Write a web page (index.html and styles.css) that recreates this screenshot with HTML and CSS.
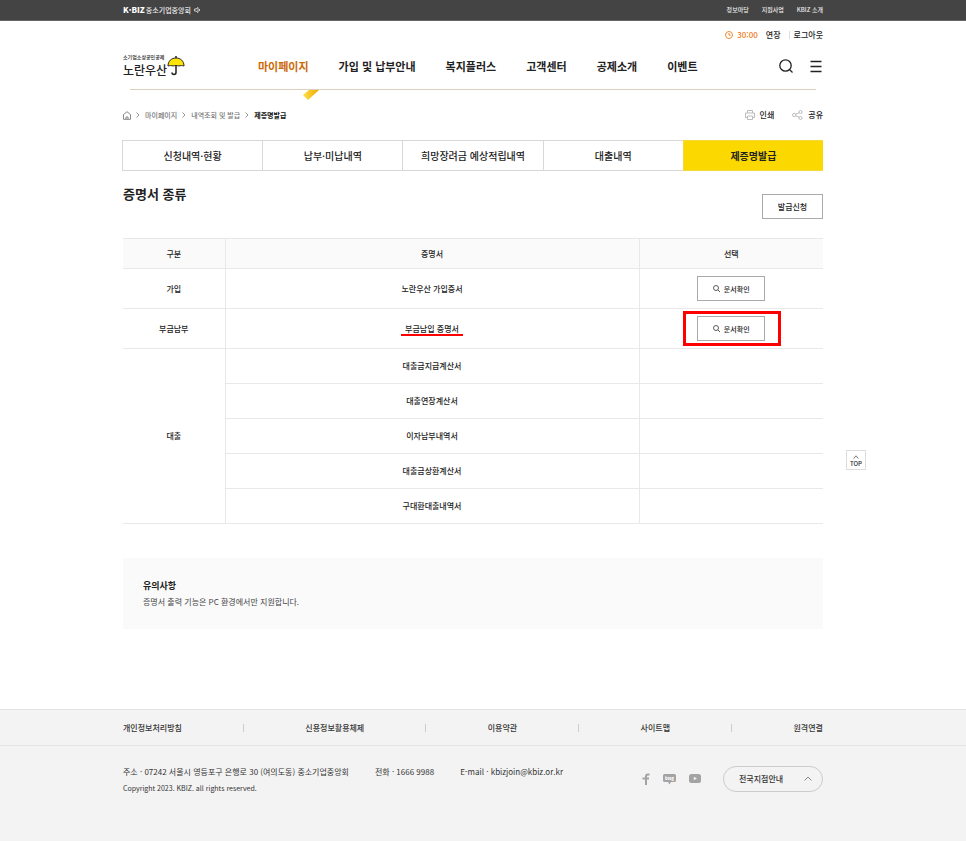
FILE: index.html
```html
<!DOCTYPE html>
<html lang="ko">
<head>
  <meta charset="UTF-8">
  <title>제증명발급 - 노란우산</title>
  <link rel="stylesheet" href="styles.css">
</head>
<body>
  <div class="topbar">
    <div class="inner">
      <a href="#" class="kbiz"><strong>K·BIZ</strong> 중소기업중앙회
        <svg width="6" height="6" viewBox="0 0 6 6" fill="none" stroke="#ccc"><path d="M0.500 2h1.500l2-1.500v5L2 4H0.500zM5.500 2v2"/></svg>
      </a>
      <div class="toplinks">
        <a href="#">정보마당</a>
        <a href="#">지원사업</a>
        <a href="#">KBIZ 소개</a>
      </div>
    </div>
  </div>

  <header>
    <div class="inner util">
      <svg width="8" height="8" viewBox="0 0 8 8" fill="none" stroke="#ee8a35"><circle cx="4" cy="4" r="3.500"/><path d="M4 2v2.200h1.700"/></svg>
      <span class="time">30:00</span>
      <button type="button">연장</button>
      <a href="#" class="logout">로그아웃</a>
    </div>
    <div class="inner gnb">
      <a href="#" class="logo">
        <span class="logo-text"><small>소기업소상공인공제</small><b>노란우산</b></span>
        <svg width="18" height="20" viewBox="0 0 18 20" fill="none" stroke="#222">
          <path d="M9 0v2M9 10v6.500c0 2.500-4 2.500-4 0" stroke-width="1.500"/>
          <path d="M1 10C1 5 4.500 2 9 2s8 3 8 8c-1.500-.6-3.500-.6-5 0-1.500-.6-4.500-.6-6 0-1.500-.6-3.500-.6-5 0z" fill="#fde400"/>
        </svg>
      </a>
      <nav>
        <a href="#" class="on">마이페이지</a>
        <a href="#">가입 및 납부안내</a>
        <a href="#">복지플러스</a>
        <a href="#">고객센터</a>
        <a href="#">공제소개</a>
        <a href="#">이벤트</a>
      </nav>
      <div class="gnb-btns">
        <button type="button" aria-label="검색"><svg width="14" height="14" viewBox="0 0 14 14" fill="none" stroke="#222" stroke-width="1.300"><circle cx="6.500" cy="6.500" r="5.700"/><path d="M10.500 10.500l3 3"/></svg></button>
        <button type="button" aria-label="전체메뉴"><svg width="12" height="14" viewBox="0 0 12 14" stroke="#222" stroke-width="1.300"><path d="M0.500 2.500h11M0.500 7.500h11M0.500 12.500h11"/></svg></button>
      </div>
    </div>
    <div class="inner line">
      <svg class="pointer" width="18" height="11" viewBox="0 0 18 11">
        <defs><linearGradient id="gold"><stop offset="0" stop-color="#ffe04a"/><stop offset="1" stop-color="#efa800"/></linearGradient></defs>
        <path d="M7 0h10L6 10 1 5z" fill="url(#gold)"/>
      </svg>
    </div>
  </header>

  <main>
    <div class="inner">
      <div class="location">
        <div class="crumbs">
          <a href="#" aria-label="홈"><svg width="8" height="9" viewBox="0 0 8 9" fill="none" stroke="#888"><path d="M0.500 3.500L4 0.700l3.500 2.800v4.800h-7zM3 8.300V6h2v2.300"/></svg></a>
          <svg class="arr" width="4" height="6" viewBox="0 0 4 6"><path d="M0.500 0.500L3 3 0.500 5.500"/></svg>
          <a href="#">마이페이지</a>
          <svg class="arr" width="4" height="6" viewBox="0 0 4 6"><path d="M0.500 0.500L3 3 0.500 5.500"/></svg>
          <a href="#">내역조회 및 발급</a>
          <svg class="arr" width="4" height="6" viewBox="0 0 4 6"><path d="M0.500 0.500L3 3 0.500 5.500"/></svg>
          <span class="now">제증명발급</span>
        </div>
        <div class="tools">
          <button type="button"><svg width="10" height="10" viewBox="0 0 10 10" fill="none" stroke="#bbb"><path d="M2.500 3V0.500h5V3M2.500 7.500h-2V3h9v4.500h-2M2.500 6h5v3.500h-5z"/></svg>인쇄</button>
          <button type="button"><svg width="11" height="10" viewBox="0 0 11 10" fill="none" stroke="#bbb"><circle cx="2.200" cy="5" r="1.700"/><circle cx="8.500" cy="2" r="1.500"/><circle cx="8.500" cy="8" r="1.500"/><path d="M3.700 4.300L7 2.700M3.700 5.700L7 7.300"/></svg>공유</button>
        </div>
      </div>

      <div class="tabs">
        <a href="#">신청내역·현황</a>
        <a href="#">납부·미납내역</a>
        <a href="#">희망장려금 예상적립내역</a>
        <a href="#">대출내역</a>
        <a href="#" class="on">제증명발급</a>
      </div>

      <div class="title">
        <h1>증명서 종류</h1>
        <button type="button" class="btn">발급신청</button>
      </div>

      <table>
        <thead>
          <tr><th class="c1">구분</th><th>증명서</th><th class="c3">선택</th></tr>
        </thead>
        <tbody>
          <tr class="tall">
            <td>가입</td>
            <td>노란우산 가입증서</td>
            <td><button type="button" class="btn doc"><svg width="7" height="7" viewBox="0 0 7 7" fill="none" stroke="#333" stroke-width=".8"><circle cx="3" cy="3" r="2.500"/><path d="M5 5l2 2"/></svg>문서확인</button></td>
          </tr>
          <tr class="tall">
            <td>부금납부</td>
            <td><span class="mark">부금납입 증명서</span></td>
            <td><span class="redbox"><button type="button" class="btn doc"><svg width="7" height="7" viewBox="0 0 7 7" fill="none" stroke="#333" stroke-width=".8"><circle cx="3" cy="3" r="2.500"/><path d="M5 5l2 2"/></svg>문서확인</button></span></td>
          </tr>
          <tr><td rowspan="5">대출</td><td>대출금지급계산서</td><td></td></tr>
          <tr><td>대출연장계산서</td><td></td></tr>
          <tr><td>이자납부내역서</td><td></td></tr>
          <tr><td>대출금상환계산서</td><td></td></tr>
          <tr><td>구대환대출내역서</td><td></td></tr>
        </tbody>
      </table>

      <div class="notice">
        <h2>유의사항</h2>
        <p>증명서 출력 기능은 PC 환경에서만 지원합니다.</p>
      </div>
    </div>
  </main>

  <footer>
    <div class="foot-links">
      <div class="inner">
        <a href="#">개인정보처리방침</a><i></i>
        <a href="#">신용정보활용체제</a><i></i>
        <a href="#">이용약관</a><i></i>
        <a href="#">사이트맵</a><i></i>
        <a href="#">원격연결</a>
      </div>
    </div>
    <div class="inner foot-info">
      <div class="address">
        <p><span>주소 · 07242 서울시 영등포구 은행로 30 (여의도동) 중소기업중앙회</span><span>전화 · 1666 9988</span><span>E-mail · kbizjoin@kbiz.or.kr</span></p>
        <p class="copy">Copyright 2023. KBIZ. all rights reserved.</p>
      </div>
      <div class="social">
        <a href="#" aria-label="페이스북"><svg width="8" height="12" viewBox="0 0 8 12" fill="none" stroke="#a3a3a3" stroke-width="2"><path d="M7.500 1.500H6C4.500 1.500 4 2.200 4 3.500V12M0.500 5.500h6.500"/></svg></a>
        <a href="#" aria-label="블로그"><svg width="13" height="12" viewBox="0 0 13 12"><path d="M1.500 1h10Q13 1 13 2.500v5Q13 9 11.500 9H8L6.500 11.500 5 9H1.500Q0 9 0 7.500v-5Q0 1 1.500 1z" fill="#a3a3a3"/><text x="6.500" y="6.500" class="blog">blog</text></svg></a>
        <a href="#" aria-label="유튜브"><svg width="12" height="12" viewBox="0 0 12 12"><rect y="1" width="12" height="9" rx="2.500" fill="#a3a3a3"/><path d="M4.800 3.700v3.600L8 5.500z" fill="#f3f3f3"/></svg></a>
      </div>
      <button type="button" class="branch">전국지점안내<svg width="8" height="5" viewBox="0 0 8 5" fill="none" stroke="#888"><path d="M0.500 4.500L4 1l3.500 3.500"/></svg></button>
    </div>
  </footer>

  <a href="#" class="top"><svg width="8" height="5" viewBox="0 0 8 5" fill="none" stroke="#555"><path d="M1 4.500L4 1l3 3.500"/></svg>TOP</a>
</body>
</html>
```
FILE: styles.css
```css
* {
  box-sizing: border-box;
}
body {
  margin: 0;
  min-height: 100vh;
  display: flex;
  flex-direction: column;
  font-family: "Noto Sans CJK KR", sans-serif;
  font-size: 8px;
  font-weight: 500;
  line-height: 12px;
  color: #222;
  background: #fff;
}
a {
  color: inherit;
  text-decoration: none;
}
button {
  font: inherit;
  color: inherit;
  background: none;
  border: 0;
  padding: 0;
  cursor: pointer;
}
svg {
  display: block;
}
h1, h2, p {
  margin: 0;
}
.inner {
  width: calc(100% - 40px);
  max-width: 700px;
  margin: 0 auto;
}
.topbar, header, main, .foot-links, footer {
  padding-right: 20px;
}
.foot-links {
  margin-right: -20px;
}

/* top bar */
.topbar {
  background: #444;
  border-bottom: 1px solid #666;
  color: #eee;
}
.topbar .inner {
  display: flex;
  justify-content: space-between;
  align-items: center;
  height: 20px;
}
.kbiz {
  display: flex;
  align-items: center;
  gap: 1px;
  font-size: 7px;
}
.kbiz strong {
  font-size: 8px;
  font-weight: 900;
  color: #fff;
}
.kbiz svg {
  margin-left: 2px;
}
.toplinks {
  display: flex;
  gap: 13px;
  font-size: 6px;
}

/* header */
.util {
  display: flex;
  justify-content: flex-end;
  align-items: center;
  height: 27px;
}
.time {
  margin: 0 8px 0 4px;
  color: #ee7a1c;
}
.logout {
  margin-left: 8px;
  padding-left: 4px;
  border-left: 1px solid #ddd;
  line-height: 8px;
}
.gnb {
  display: flex;
  align-items: center;
  height: 41px;
  padding: 0 1px 5px 0;
}
.logo {
  display: flex;
  align-items: center;
  width: 135px;
}
.logo-text {
  display: flex;
  flex-direction: column;
  width: 44px;
  white-space: nowrap;
}
.logo small {
  font-size: 5px;
  line-height: 8px;
}
.logo b {
  font-size: 12px;
  font-weight: 500;
  line-height: 18px;
}
nav {
  display: flex;
  gap: 30px;
  flex: 1;
  font-size: 11px;
  font-weight: 700;
  line-height: 16px;
  white-space: nowrap;
}
nav .on {
  color: #cc6a0a;
}
.gnb-btns {
  display: flex;
  gap: 17px;
}
.line {
  position: relative;
}
.line::before {
  content: "";
  display: block;
  height: 1px;
  margin: 0 7px;
  background: #ddd0bd;
}
.pointer {
  position: absolute;
  left: 179px;
  top: 1px;
}

/* content */
.location {
  display: flex;
  justify-content: space-between;
  align-items: center;
  height: 50px;
}
.crumbs {
  display: flex;
  align-items: center;
  gap: 5px;
  font-size: 7px;
  color: #777;
}
.crumbs .arr {
  fill: none;
  stroke: #999;
}
.crumbs .now {
  color: #111;
  font-weight: 700;
}
.tools {
  display: flex;
  gap: 18px;
}
.tools button {
  display: flex;
  align-items: center;
  gap: 5px;
}
.tabs {
  display: flex;
  margin-left: -1px;
  font-size: 10px;
  line-height: 29px;
  text-align: center;
}
.tabs a {
  flex: 1;
  border: 1px solid #d8d8d8;
  border-right: 0;
}
.tabs .on {
  background: #fbd800;
  border-color: #f5d93c;
  font-weight: 700;
}
.title {
  display: flex;
  justify-content: space-between;
  align-items: flex-end;
  height: 48px;
}
.title h1 {
  align-self: flex-start;
  padding-top: 13px;
  font-size: 13px;
  line-height: 20px;
}
.btn {
  width: 61px;
  height: 25px;
  border: 1px solid #aaa;
  background: #fff;
}
.doc {
  display: flex;
  justify-content: center;
  align-items: center;
  gap: 4px;
  width: 68px;
  margin: 0 auto;
  font-size: 7px;
}
table {
  width: 100%;
  margin-top: 19px;
  border-collapse: collapse;
  table-layout: fixed;
  text-align: center;
}
th {
  height: 30px;
  background: #fafafa;
  font-weight: 500;
}
th, td {
  padding: 0;
  border: 1px solid #e8e8e8;
}
th:first-child, tr.tall td:first-child, td[rowspan] {
  border-left: 0;
}
th:last-child, td:last-child {
  border-right: 0;
}
td {
  height: 35px;
}
.tall td {
  height: 40px;
}
.c1 {
  width: 102px;
}
.c3 {
  width: 184px;
}
.mark {
  position: relative;
}
.mark::after {
  content: "";
  position: absolute;
  left: -4px;
  right: -4px;
  bottom: -2px;
  height: 2px;
  background: #f00;
}
.redbox {
  display: block;
  position: relative;
}
.redbox::after {
  content: "";
  position: absolute;
  left: 43px;
  right: 42px;
  top: -5px;
  bottom: -5px;
  border: 3px solid #f00;
}
.notice {
  margin: 34px 0 80px;
  padding: 20px;
  background: #fafafa;
}
.notice h2 {
  font-size: 9px;
  line-height: 15px;
}
.notice p {
  padding-top: 1px;
  line-height: 15px;
  font-weight: 400;
  color: #444;
}

/* footer */
footer {
  flex: 1;
  background: #f3f3f3;
  border-top: 1px solid #e2e2e2;
  color: #333;
}
.foot-links {
  border-bottom: 1px solid #e4e4e4;
}
.foot-links .inner {
  display: flex;
  justify-content: space-between;
  align-items: center;
  height: 35px;
}
.foot-links i {
  width: 1px;
  height: 8px;
  background: #ccc;
}
.foot-info {
  display: flex;
  align-items: center;
  padding-top: 14px;
}
.address {
  flex: 1;
  padding-top: 3px;
}
.address p {
  display: flex;
  gap: 26px;
  line-height: 17px;
  font-weight: 400;
}
.address .copy {
  font-size: 7px;
}
.social {
  display: flex;
  align-items: center;
  gap: 13px;
  margin-right: 22px;
}
.blog {
  font-size: 4px;
  font-weight: 900;
  fill: #fff;
  text-anchor: middle;
}
.branch {
  display: flex;
  justify-content: space-between;
  align-items: center;
  width: 100px;
  height: 26px;
  padding: 0 10px 0 15px;
  border: 1px solid #ccc;
  border-radius: 13px;
}
.top {
  position: fixed;
  right: 100px;
  top: 450px;
  display: flex;
  flex-direction: column;
  align-items: center;
  width: 20px;
  height: 20px;
  padding-top: 4px;
  border: 1px solid #ddd;
  background: #fff;
  font-size: 6px;
  line-height: 10px;
}
```
